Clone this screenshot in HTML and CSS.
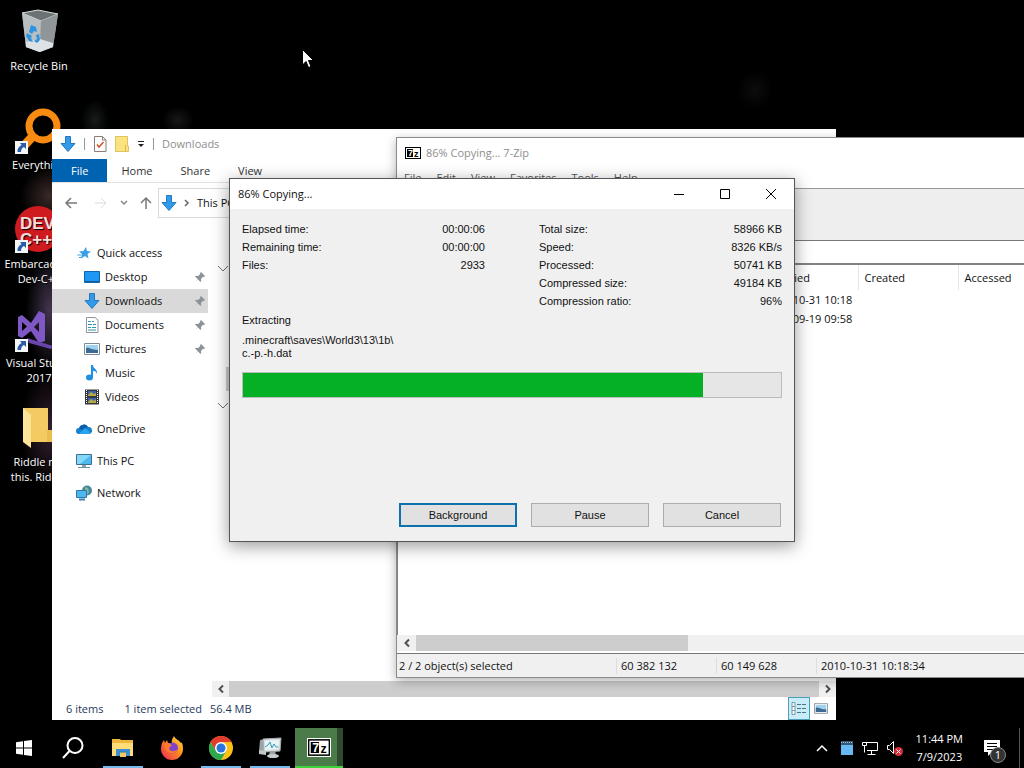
FILE: index.html
```html
<!DOCTYPE html>
<html lang="en">
<head>
    <meta charset="UTF-8">
    <meta name="viewport" content="width=device-width, initial-scale=1.0">
    <title>Desktop</title>
    <link rel="stylesheet" href="styles.css">
</head>
<body>
    <!-- Shared icons -->
    <svg class="defs" aria-hidden="true">
        <symbol id="i-down" viewBox="0 0 16 16">
            <path d="M5.500 0.500h5v7h4.500L8 15.500 1 7.500h4.500z" fill="#2f9bea" stroke="#2678bd" stroke-width="1"/>
        </symbol>
        <symbol id="i-7z" viewBox="0 0 16 12">
            <rect x="0" y="0" width="16" height="12" fill="#000"/>
            <rect x="1" y="1" width="14" height="10" fill="#fff"/>
            <rect x="2" y="2" width="6" height="8" fill="#000"/>
            <text x="3" y="9" class="seven">7</text>
            <text x="9" y="10" class="zed">z</text>
        </symbol>
        <symbol id="i-pin" viewBox="0 0 12 12">
            <path d="M7 1l4 4-1 1-1-.3L7 8l.2 2L6.400 11 3.800 8.300 1 11l2.700-3L1 5.500 2 4.700l2 .2L6.300 3 6 2z" fill="#8b939a"/>
        </symbol>
        <symbol id="i-shortcut" viewBox="0 0 13 13">
            <path d="M0 0h13v13H0z" fill="#f4f6f8"/>
            <path d="M5 2h6v6L9 6c-2 1-3 2.500-3 5H2.500C2 8 4 5.500 6.600 4z" fill="#2b5ca8"/>
        </symbol>
        <symbol id="i-monitor" viewBox="0 0 16 16">
            <path d="M.5 1.500h15v10H.5z" fill="#4db8ee" stroke="#3d6f96"/>
            <path d="M1 2h14L4 11H1z" fill="#86d6f8"/>
            <path d="M6 12h4v2H6z" fill="#8aa4b5"/>
            <path d="M2 14.500h12" stroke="#6f8fa4"/>
        </symbol>
        <symbol id="i-picture" viewBox="0 0 16 12">
            <path d="M.5.5h15v11H.5z" fill="#fff" stroke="#7f8b96"/>
            <path d="M2 2h12v8H2z" fill="#9fd2f1"/>
            <path d="M2 5c3-1 5 2 12 2v3H2z" fill="#3c6a92"/>
        </symbol>
        <symbol id="i-left" viewBox="0 0 8 10">
            <path d="M6 1.500L2.500 5 6 8.500" fill="none" stroke="#505050" stroke-width="2"/>
        </symbol>
        <symbol id="i-right" viewBox="0 0 8 10">
            <path d="M2 1.500L5.500 5 2 8.500" fill="none" stroke="#505050" stroke-width="2"/>
        </symbol>
        <symbol id="i-chevron" viewBox="0 0 12 8">
            <path d="M1 1l5 5 5-5" fill="none" stroke="#707070" stroke-width="1"/>
        </symbol>
    </svg>

    <div class="screen">
        <main class="desktop">
            <div class="shortcuts">
                <a class="shortcut" href="#">
                    <svg class="art" viewBox="4 0 48 48">
                        <path d="M11 5l16-3 20 4-5 33-14 5-13-5z" fill="#9da3a6"/>
                        <path d="M11 5l16-3 20 4-17 7z" fill="#6d7274" stroke="#d6dadb"/>
                        <path d="M11 5l19 8-1 31-14-5z" fill="#b9bec0"/>
                        <path d="M30 13l17-7-5 33-13 5z" fill="#8f9598"/>
                        <path d="M15 34l14-3 13 4v4l-13 5-14-5z" fill="#dfe2e4"/>
                        <path d="M20 17l5 2 1 5-3-1-2 3-3-2zM16 25l5 3-1 2 2 4-4-1-3-5zM25 27l3-1 1 6-3 3-3-2 3-2z" fill="#2f94e0"/>
                    </svg>
                    <span>Recycle Bin</span>
                </a>
                <a class="shortcut" href="#">
                    <svg class="art" viewBox="3 0 48 48">
                        <circle cx="31" cy="19" r="14" fill="none" stroke="#f98a12" stroke-width="7"/>
                        <path d="M21 29L10 41" stroke="#f98a12" stroke-width="9"/>
                        <use href="#i-shortcut" x="3" y="34" width="13" height="13"/>
                    </svg>
                    <span>Everything</span>
                </a>
                <a class="shortcut" href="#">
                    <svg class="art" viewBox="3 0 48 48">
                        <circle cx="26" cy="23" r="23" fill="#cf1b20"/>
                        <text x="8" y="23" class="dev">DEV</text>
                        <text x="8" y="39" class="dev">C++</text>
                        <use href="#i-shortcut" x="3" y="34" width="13" height="13"/>
                    </svg>
                    <span>Embarcadero Dev-C++</span>
                </a>
                <a class="shortcut" href="#">
                    <svg class="art" viewBox="3 0 48 48">
                        <path d="M6 12l4-2 9 8L27 6l6 3v27l-6 2-8-12-9 7-4-2zm4 5v9l5-4.500zm17 0l-5 5 5 5z" fill="#8058c6"/>
                        <path d="M15 33l26 8-2 3-22-6z" fill="#6845ab"/>
                        <use href="#i-shortcut" x="3" y="34" width="13" height="13"/>
                    </svg>
                    <span>Visual Studio 2017</span>
                </a>
                <a class="shortcut" href="#">
                    <svg class="art" viewBox="3 0 48 48">
                        <path d="M11 4h25v34H15z" fill="#f3cb62"/>
                        <path d="M11 4l8 7v33l-8-6z" fill="#ffe398"/>
                        <path d="M35 26h6v12h-6z" fill="#e9bd50"/>
                    </svg>
                    <span>Riddle me<br>this. Riddle</span>
                </a>
            </div>

            <section class="window explorer">
                <header class="explorer-title">
                    <svg width="16" height="16"><use href="#i-down"/></svg>
                    <i class="bar"></i>
                    <svg width="14" height="16" viewBox="0 0 14 16">
                        <path d="M1.500.5H9.500L13 4v11.500H1.500z" fill="#fdfdfd" stroke="#8a7f78"/>
                        <path d="M9.500.5V4H13" fill="none" stroke="#8a7f78"/>
                        <path d="M4 8.500l2 2.500 4.500-5" fill="none" stroke="#d0522b" stroke-width="1.500"/>
                    </svg>
                    <svg width="14" height="16" viewBox="0 0 14 16">
                        <path d="M.5.5h12V10h1v5.500H.5z" fill="#fbe384" stroke="#e2c35a"/>
                        <path d="M10.500 15V9" stroke="#dcb94c"/>
                    </svg>
                    <svg width="8" height="8" viewBox="0 0 8 8"><path d="M1 1.500h6" stroke="#222"/><path d="M1 4h6L4 7z" fill="#222"/></svg>
                    <i class="bar"></i>
                    <span>Downloads</span>
                </header>
                <nav class="ribbon">
                    <a class="file" href="#">File</a>
                    <a href="#">Home</a>
                    <a href="#">Share</a>
                    <a href="#">View</a>
                </nav>
                <div class="navbar">
                    <button aria-label="Back"><svg width="14" height="12" viewBox="0 0 14 12"><path d="M13 6H2M7 1L2 6l5 5" fill="none" stroke="#777" stroke-width="1.500"/></svg></button>
                    <button aria-label="Forward"><svg width="14" height="12" viewBox="0 0 14 12"><path d="M1 6h11M7 1l5 5-5 5" fill="none" stroke="#dcdcdc" stroke-width="1"/></svg></button>
                    <button class="recent" aria-label="Recent locations"><svg width="8" height="6" viewBox="0 0 8 6"><path d="M1 1l3 3 3-3" fill="none" stroke="#888" stroke-width="1.500"/></svg></button>
                    <button aria-label="Up"><svg width="12" height="14" viewBox="0 0 12 14"><path d="M6 13V2M1 7l5-5 5 5" fill="none" stroke="#777" stroke-width="1.500"/></svg></button>
                    <div class="address">
                        <svg width="16" height="16"><use href="#i-down"/></svg>
                        <svg width="6" height="8" viewBox="0 0 6 8"><path d="M1 1l3 3-3 3" fill="none" stroke="#666" stroke-width="1.500"/></svg>
                        <span>This PC</span>
                    </div>
                </div>
                <div class="explorer-body">
                    <nav class="tree">
                        <a class="root" href="#">
                            <svg width="16" height="16" viewBox="0 0 16 16"><path d="M10 2l1 4 4 .5-3.500 2.500 1 4.500-3.500-2.500-4 2.500 1-4.500L3 6.500l4.500-.5z" fill="#3a9fe8"/><path d="M1.500 10h4M3 12.500h3" stroke="#3a9fe8"/></svg>
                            <span>Quick access</span>
                        </a>
                        <a href="#">
                            <svg width="16" height="16" viewBox="0 0 16 16"><path d="M.5 2.500h15v11H.5z" fill="#1e98f2" stroke="#1565ad"/><path d="M1 12.500h14" stroke="#105a9e"/></svg>
                            <span>Desktop</span>
                            <svg class="pin" width="12" height="12"><use href="#i-pin"/></svg>
                        </a>
                        <a class="active" href="#">
                            <svg width="16" height="16"><use href="#i-down"/></svg>
                            <span>Downloads</span>
                            <svg class="pin" width="12" height="12"><use href="#i-pin"/></svg>
                        </a>
                        <a href="#">
                            <svg width="16" height="16" viewBox="0 0 16 16"><path d="M2.500.5H11L14 3v12.500H2.500z" fill="#fff" stroke="#8b969e"/><path d="M4 4.500h3M8 4.500h2M4 7.500h4M9 7.500h3M4 10.500h3M8 10.500h4M4 13h8" stroke="#3495a8"/></svg>
                            <span>Documents</span>
                            <svg class="pin" width="12" height="12"><use href="#i-pin"/></svg>
                        </a>
                        <a href="#">
                            <svg width="16" height="12"><use href="#i-picture"/></svg>
                            <span>Pictures</span>
                            <svg class="pin" width="12" height="12"><use href="#i-pin"/></svg>
                        </a>
                        <a href="#">
                            <svg width="16" height="16" viewBox="0 0 16 16"><ellipse cx="5.500" cy="12.500" rx="3.500" ry="3" fill="#1e90e0"/><path d="M7 0h2c0 4 5 4 4 9-1-3-2-3-4-3v7H7z" fill="#1e90e0"/></svg>
                            <span>Music</span>
                        </a>
                        <a href="#">
                            <svg width="16" height="16" viewBox="0 0 16 16"><path d="M1 .5h14v15H1z" fill="#35383d"/><path d="M4 2h8v5H4zM4 9h8v5H4z" fill="#3d63a8"/><path d="M4 6l3-3 3 2 2-1v3H4zM4 13l3-3 3 2 2-2v4H4z" fill="#b7a84a"/><path d="M2.500 1v14M13.500 1v14" stroke="#fff" stroke-width="1" stroke-dasharray="1 1"/></svg>
                            <span>Videos</span>
                        </a>
                        <a class="root" href="#">
                            <svg width="16" height="16" viewBox="0 0 16 16"><path d="M3 13a3 3 0 0 1 0-6 5 5 0 0 1 9-1 3.500 3.500 0 0 1 1 7z" fill="#1680d0"/><path d="M3 13l6-6 6 5-2 1z" fill="#29a5ed"/><path d="M3 7a5 5 0 0 1 9-1L9 7 6 9z" fill="#0d5da8"/></svg>
                            <span>OneDrive</span>
                        </a>
                        <a class="root" href="#">
                            <svg width="16" height="16"><use href="#i-monitor"/></svg>
                            <span>This PC</span>
                        </a>
                        <a class="root" href="#">
                            <svg width="16" height="16" viewBox="0 0 16 16"><circle cx="11" cy="5.500" r="5" fill="#46889b"/><path d="M9 2l3 1 1 4-2 3-2-3z" fill="#7fb9a4"/><path d="M.5 5.500h10v7H.5z" fill="#4db8ee" stroke="#2f76a8"/><path d="M3 14.500h6" stroke="#3a82b3" stroke-width="2"/></svg>
                            <span>Network</span>
                        </a>
                    </nav>
                    <div class="files">
                        <div class="groups">
                            <button aria-label="Collapse group"><svg width="12" height="8"><use href="#i-chevron"/></svg></button>
                            <i class="nub"></i>
                            <button aria-label="Collapse group"><svg width="12" height="8"><use href="#i-chevron"/></svg></button>
                        </div>
                        <div class="scroll">
                            <button aria-label="Scroll left"><svg width="8" height="10"><use href="#i-left"/></svg></button>
                            <i class="thumb"></i>
                            <button aria-label="Scroll right"><svg width="8" height="10"><use href="#i-right"/></svg></button>
                        </div>
                    </div>
                </div>
                <footer class="explorer-status">
                    <span>6 items</span>
                    <span class="selected">1 item selected</span>
                    <span>56.4 MB</span>
                    <div class="views">
                        <button class="on" aria-label="Details"><svg width="16" height="14" viewBox="0 0 16 14"><path d="M1 .5h3v12H1zM1 4.500h3M1 8.500h3" fill="#fff" stroke="#7b98a6"/><path d="M6 2.500h4M11 2.500h4M6 6.500h4M11 6.500h4M6 10.500h4M11 10.500h4" stroke="#4f7482"/></svg></button>
                        <button aria-label="Large icons"><svg width="14" height="11"><use href="#i-picture"/></svg></button>
                    </div>
                </footer>
            </section>

            <section class="window zip">
                <header class="zip-title">
                    <svg width="16" height="12"><use href="#i-7z"/></svg>
                    <span>86% Copying... 7-Zip</span>
                </header>
                <nav class="menu">
                    <a href="#">File</a>
                    <a href="#">Edit</a>
                    <a href="#">View</a>
                    <a href="#">Favorites</a>
                    <a href="#">Tools</a>
                    <a href="#">Help</a>
                </nav>
                <div class="toolbar"></div>
                <div class="path"></div>
                <div class="list">
                    <table>
                        <thead>
                            <tr><th class="name"></th><th></th><th></th><th>Modified</th><th>Created</th><th class="last">Accessed</th></tr>
                        </thead>
                        <tbody>
                            <tr><td></td><td></td><td></td><td>2010-10-31 10:18</td><td></td><td></td></tr>
                            <tr><td></td><td></td><td></td><td>2010-09-19 09:58</td><td></td><td></td></tr>
                        </tbody>
                    </table>
                </div>
                <div class="scroll zip-scroll">
                    <button aria-label="Scroll left"><svg width="8" height="10"><use href="#i-left"/></svg></button>
                    <i class="thumb"></i>
                </div>
                <footer class="zip-status">
                    <span class="count">2 / 2 object(s) selected</span>
                    <span>60 382 132</span>
                    <span>60 149 628</span>
                    <span class="date">2010-10-31 10:18:34</span>
                </footer>
            </section>

            <section class="window dialog">
                <header class="dialog-title">
                    <h1>86% Copying...</h1>
                    <button aria-label="Minimize"><svg width="12" height="12" viewBox="0 0 12 12"><path d="M1 6.500h10" stroke="#000"/></svg></button>
                    <button aria-label="Maximize"><svg width="12" height="12" viewBox="0 0 12 12"><path d="M1.500 1.500h9v9h-9z" fill="none" stroke="#000"/></svg></button>
                    <button aria-label="Close"><svg width="12" height="12" viewBox="0 0 12 12"><path d="M1 1l10 10M11 1L1 11" stroke="#000"/></svg></button>
                </header>
                <div class="dialog-body">
                    <div class="stats">
                        <dl>
                            <dt>Elapsed time:</dt><dd>00:00:06</dd>
                            <dt>Remaining time:</dt><dd>00:00:00</dd>
                            <dt>Files:</dt><dd>2933</dd>
                        </dl>
                        <dl>
                            <dt>Total size:</dt><dd>58966 KB</dd>
                            <dt>Speed:</dt><dd>8326 KB/s</dd>
                            <dt>Processed:</dt><dd>50741 KB</dd>
                            <dt>Compressed size:</dt><dd>49184 KB</dd>
                            <dt>Compression ratio:</dt><dd>96%</dd>
                        </dl>
                    </div>
                    <label class="action" for="copy">Extracting</label>
                    <p class="current">.minecraft\saves\World3\13\1b\<br>c.-p.-h.dat</p>
                    <progress id="copy" value="50741" max="59300"></progress>
                    <div class="buttons">
                        <button class="default">Background</button>
                        <button>Pause</button>
                        <button>Cancel</button>
                    </div>
                </div>
            </section>

            <svg class="cursor" width="12" height="20" viewBox="0 0 12 20">
                <path d="M.5.5v15.500l3.500-3.500 2.500 6 2.500-1-2.500-6h5z" fill="#fff" stroke="#000"/>
            </svg>
        </main>

        <footer class="taskbar">
            <button class="task" aria-label="Start">
                <svg width="16" height="16" viewBox="0 0 16 16"><path d="M0 2.200L7 1.200V7.500H0zM8 1l8-1v7.500H8zM0 8.500h7v6.300l-7-1zM8 8.500h8V16l-8-1z" fill="#fff"/></svg>
            </button>
            <button class="task search" aria-label="Search">
                <svg width="24" height="24" viewBox="0 0 24 24"><circle cx="14" cy="9.500" r="7.500" fill="none" stroke="#fff" stroke-width="2"/><path d="M8.500 15L2 22" stroke="#fff" stroke-width="2"/></svg>
            </button>
            <button class="task open" aria-label="File Explorer">
                <svg width="22" height="20" viewBox="0 0 22 20"><path d="M0 2V1h8l1 1h12v16H0z" fill="#eeb63d"/><path d="M0 5h21v13H0z" fill="#ffdc77"/><path d="M4 11h14v7h-4v-3H8v3H4z" fill="#3d8fd1"/><path d="M8 14h6v5H8z" fill="#f1c862"/><path d="M7 14h8" stroke="#2a72b0"/></svg>
            </button>
            <button class="task" aria-label="Firefox">
                <svg width="24" height="24" viewBox="0 0 24 24">
                    <defs><linearGradient id="fox" x1="1" y1="0" x2="0" y2="1"><stop offset="0" stop-color="#ffe347"/><stop offset=".45" stop-color="#ff8b1c"/><stop offset="1" stop-color="#f0205f"/></linearGradient></defs>
                    <path d="M14 0c1 3 5 4 7 7 1-1 2 2 2 6a11 11 0 0 1-22 0c0-4 1-7 3-9l1 3 2-3 1 3 4 0c-1-3 1-5 2-7z" fill="url(#fox)"/>
                    <circle cx="12.500" cy="12" r="5.500" fill="#8044cb"/>
                    <path d="M4 8c4-3 5 0 8 1l-3 3c0 4 6 4 9 1-2 7-13 6-14-5z" fill="#ff7a2b"/>
                </svg>
            </button>
            <button class="task open" aria-label="Chrome">
                <svg width="24" height="24" viewBox="0 0 24 24">
                    <circle cx="12" cy="12" r="12" fill="#fbc116"/>
                    <path d="M1.600 6A12 12 0 0 1 22.400 6H12L6.800 15z" fill="#e33b2e"/>
                    <path d="M1.600 6A12 12 0 0 0 12 24l5.200-9H6.800z" fill="#2da94f"/>
                    <circle cx="12" cy="12" r="6" fill="#fff"/>
                    <circle cx="12" cy="12" r="4.500" fill="#2b73df"/>
                </svg>
            </button>
            <button class="task open" aria-label="Resource Monitor">
                <svg width="24" height="22" viewBox="0 0 24 22">
                    <path d="M2 3l6-1v15l-7-2z" fill="#9ca4a6"/>
                    <path d="M5 2l18-1-1 13-16 1z" fill="#d9dfe1" stroke="#a4abad"/>
                    <path d="M7 4l14-1-1 9-13 1z" fill="#eaf5f7"/>
                    <path d="M7 10l3-2 2-3 2 6 2-4 2 3h2" fill="none" stroke="#3599b6"/>
                    <path d="M12 14h5l1 4H11z" fill="#9ba3a5"/><ellipse cx="15" cy="19" rx="6" ry="2" fill="#c8cecf"/>
                    <path d="M1 13l7 1v4l-7-1z" fill="#c2c8ca"/>
                </svg>
            </button>
            <button class="task current-task" aria-label="7-Zip">
                <svg class="task-7z" width="22" height="17"><use href="#i-7z"/></svg>
            </button>
            <div class="tray">
                <button aria-label="Show hidden icons"><svg width="12" height="8" viewBox="0 0 12 8"><path d="M1 7l5-5 5 5" fill="none" stroke="#fff" stroke-width="1.500"/></svg></button>
                <svg width="12" height="14" viewBox="0 0 12 14"><path d="M0 0h12v14H0z" fill="#66b9f2"/><path d="M0 0h12v4H0z" fill="#345773"/><path d="M0 1.500h12" stroke="#a5c9e0" stroke-dasharray="1 1"/></svg>
                <svg width="16" height="14" viewBox="0 0 16 14"><path d="M4 1.500h11.500v8H5M.5 1.500h4v3h-4zM2.500 5v6.500M9.500 10v3M5.500 13.500h8" fill="none" stroke="#fff"/></svg>
                <svg width="16" height="15" viewBox="0 0 16 15"><path d="M.5 4.500h2l4-4v12l-4-4h-2z" fill="none" stroke="#fff"/><circle cx="11.500" cy="10.500" r="4.500" fill="#d52e37"/><path d="M9.500 8.500l4 4M13.500 8.500l-4 4" stroke="#fff"/></svg>
                <div class="clock"><time>11:44 PM</time><time>7/9/2023</time></div>
                <button class="notes" aria-label="Notifications">
                    <svg width="16" height="16" viewBox="0 0 16 16"><path d="M0 0h16v12H8l-4 4v-4H0z" fill="#fff"/><path d="M3 3.500h10M3 6.500h10M3 9.500h7" stroke="#000"/></svg>
                    <span class="badge">1</span>
                </button>
                <i class="peek"></i>
            </div>
        </footer>
    </div>
</body>
</html>
```
FILE: styles.css
```css
* {
    box-sizing: border-box;
}
body {
    margin: 0;
    background-color: #000;
    color: #111;
    font-family: "Open Sans", "Noto Sans", sans-serif;
    font-size: 11px;
    line-height: 16px;
}
a {
    color: inherit;
    text-decoration: none;
}
button {
    display: flex;
    align-items: center;
    justify-content: center;
    padding: 0;
    border: none;
    background: none;
    font: inherit;
    color: inherit;
}
svg {
    display: block;
    flex-shrink: 0;
}
.defs {
    display: none;
}
.seven, .zed {
    font: bold 9px "Liberation Sans", sans-serif;
}
.seven {
    fill: #fff;
}
.dev {
    font: bold 17px "Liberation Sans", sans-serif;
    fill: #f6dcdc;
}
.screen {
    display: flex;
    flex-direction: column;
    height: 100vh;
    overflow: hidden;
}

/* Desktop */
.desktop {
    position: relative;
    flex: 1;
    overflow: hidden;
    background:
        radial-gradient(ellipse 24px 60px at 50px 310px, #43364f, transparent),
        radial-gradient(ellipse 30px 60px at 50px 430px, #33202f, transparent),
        radial-gradient(ellipse 30px 30px at 50px 196px, #3a2a28, transparent),
        radial-gradient(ellipse 14px 20px at 95px 120px, #171a1b, transparent),
        radial-gradient(ellipse 16px 14px at 178px 120px, #171717, transparent),
        radial-gradient(ellipse 18px 20px at 755px 90px, #0c0c0c, transparent),
        #000;
}
.shortcuts {
    display: grid;
    grid-auto-rows: 99px;
    width: 78px;
    padding-top: 8px;
}
.shortcut {
    display: flex;
    flex-direction: column;
    align-items: center;
    gap: 2px;
    color: #fff;
    line-height: 15px;
    text-align: center;
    text-shadow: 1px 1px 1px #000;
}
.art {
    width: 48px;
    height: 48px;
}
.window {
    position: absolute;
    display: flex;
    flex-direction: column;
}

/* File explorer */
.explorer {
    left: 52px;
    top: 129px;
    width: 784px;
    height: 591px;
    background-color: #fff;
}
.explorer-title {
    display: flex;
    align-items: center;
    gap: 8px;
    height: 30px;
    padding-left: 8px;
    color: #8e8e8e;
}
.bar {
    width: 1px;
    height: 12px;
    background-color: #999;
}
.ribbon {
    display: flex;
    height: 24px;
    border-bottom: 1px solid #e2e2e2;
    color: #333;
}
.ribbon a {
    padding: 4px 14px;
}
.ribbon .file {
    padding: 4px 19px;
    background-color: #0063b1;
    color: #fff;
}
.navbar {
    display: flex;
    align-items: center;
    gap: 16px;
    height: 40px;
    padding-left: 12px;
}
.recent {
    margin: 0 -4px;
}
.address {
    display: flex;
    flex: 1;
    align-items: center;
    gap: 7px;
    height: 30px;
    margin-left: -10px;
    margin-right: 8px;
    padding-left: 2px;
    border: 1px solid #d9d9d9;
}
.explorer-body {
    display: flex;
    flex: 1;
}
.tree {
    width: 160px;
    padding-top: 18px;
}
.tree a {
    display: flex;
    align-items: center;
    gap: 5px;
    height: 24px;
    margin-right: 4px;
    padding: 0 2px 0 32px;
}
.tree .root {
    margin: 8px 0;
    padding-left: 24px;
}
.tree .root:first-child {
    margin: 0;
}
.tree .root + .root {
    margin-top: 0;
}
.tree .active {
    background-color: #d9d9d9;
}
.pin {
    margin-left: auto;
}
.files {
    display: flex;
    flex: 1;
    flex-direction: column;
}
.groups {
    display: flex;
    flex: 1;
    flex-direction: column;
    align-items: flex-start;
    padding: 42px 0 0 5px;
}
.nub {
    width: 8px;
    height: 24px;
    margin: 94px 0 11px 9px;
    background-color: #cdcdcd;
}
.scroll {
    display: flex;
    height: 16px;
    background-color: #f0f0f0;
}
.scroll button {
    width: 17px;
}
.thumb {
    flex: 1;
    background-color: #cdcdcd;
}
.explorer-status {
    display: flex;
    align-items: center;
    height: 23px;
    padding-left: 14px;
    color: #1e395b;
}
.selected {
    margin: 0 8px 0 21px;
}
.views {
    display: flex;
    margin-left: auto;
    padding-right: 4px;
}
.views button {
    width: 22px;
    height: 23px;
}
.views .on {
    border: 1px solid #4b9fbd;
    background-color: #c9edf8;
}

/* 7-Zip file manager */
.zip {
    left: 396px;
    right: 0;
    top: 137px;
    height: 541px;
    border: 1px solid #8b8b8b;
    border-right: none;
    background-color: #fff;
    box-shadow: 0 3px 10px rgba(0,0,0,0.3);
}
.zip-title {
    display: flex;
    align-items: center;
    gap: 5px;
    height: 30px;
    padding-left: 8px;
    color: #8e8e8e;
}
.menu {
    display: flex;
    gap: 15px;
    height: 20px;
    padding: 2px 7px;
    color: #555;
}
.toolbar {
    height: 53px;
    border-top: 1px solid #999;
    border-bottom: 1px solid #777;
    background-color: #eee;
}
.path {
    height: 24px;
    border-bottom: 2px solid #828282;
}
.list {
    flex: 1;
    overflow: hidden;
    border-left: 1px solid #828282;
}
table {
    width: 100%;
    border-collapse: collapse;
    table-layout: fixed;
}
th {
    width: 100px;
    height: 25px;
    padding: 0 6px;
    border-right: 1px solid #e5e5e5;
    font-weight: normal;
    text-align: left;
}
.name {
    width: 160px;
}
.last {
    width: auto;
    border-right: none;
}
td {
    height: 19px;
    padding: 0 6px;
    white-space: nowrap;
}
.zip-scroll {
    margin-bottom: 2px;
}
.zip-scroll button {
    width: 19px;
}
.zip-scroll .thumb {
    flex: 0 0 272px;
}
.zip-status {
    display: flex;
    align-items: center;
    height: 24px;
    border-top: 1px solid #777;
    background-color: #f0f0f0;
}
.zip-status span {
    width: 100px;
    padding-left: 4px;
    border-left: 1px solid #ddd;
}
.zip-status .count {
    width: 219px;
    padding-left: 2px;
    border-left: none;
}
.zip-status .date {
    width: auto;
}

/* Progress dialog */
.dialog {
    left: 229px;
    top: 178px;
    width: 566px;
    height: 364px;
    border: 1px solid #555;
    background-color: #f0f0f0;
    box-shadow: 0 4px 16px rgba(0,0,0,0.4);
}
.dialog-title {
    display: flex;
    height: 30px;
    background-color: #fff;
}
.dialog-title h1 {
    margin: 0 auto 0 8px;
    font-size: 11px;
    font-weight: normal;
    line-height: 30px;
}
.dialog-title button {
    width: 46px;
    height: 29px;
}
.dialog-body {
    display: flex;
    flex: 1;
    flex-direction: column;
    padding: 11px 12px 14px;
    font-family: "Liberation Sans", Arial, sans-serif;
}
.stats {
    display: grid;
    grid-template-columns: 1fr 1fr;
    gap: 54px;
    line-height: 18px;
}
dl {
    display: grid;
    grid-template-columns: auto auto;
    align-content: start;
    margin: 0;
}
dd {
    margin: 0;
    text-align: right;
}
.action {
    margin-top: 2px;
}
.current {
    margin: 6px 0 12px;
    line-height: 13px;
}
progress {
    display: block;
    width: 100%;
    height: 26px;
    border: 1px solid #bcbcbc;
    background-color: #e6e6e6;
    -webkit-appearance: none;
    appearance: none;
}
progress::-webkit-progress-bar {
    background-color: #e6e6e6;
}
progress::-webkit-progress-value {
    background-color: #06b025;
}
.buttons {
    display: flex;
    justify-content: flex-end;
    gap: 14px;
    margin-top: auto;
    padding-right: 1px;
}
.buttons button {
    width: 118px;
    height: 24px;
    border: 1px solid #adadad;
    background-color: #e1e1e1;
}
.buttons .default {
    border: 2px solid #0f70b0;
}
.cursor {
    position: absolute;
    left: 302px;
    top: 49px;
}

/* Taskbar */
.taskbar {
    display: flex;
    gap: 1px;
    height: 40px;
    background-color: #000;
    color: #fff;
}
.task {
    width: 48px;
    height: 40px;
}
.search {
    margin-right: 1px;
}
.open {
    background: linear-gradient(#76b9ed, #76b9ed) center bottom / 40px 2px no-repeat;
}
.current-task {
    border-bottom: 2px solid #40d43b;
    background: linear-gradient(90deg, #4a7b48 42px, #304a30 42px);
}
.task-7z {
    outline: 1px solid #fff;
}
.tray {
    display: flex;
    align-items: center;
    gap: 8px;
    margin-left: auto;
}
.tray svg {
    margin-left: 1px;
}
.tray button:first-child {
    margin-right: 4px;
}
.clock {
    display: flex;
    flex-direction: column;
    align-items: center;
    margin: 0 8px 0 5px;
    line-height: 18px;
}
.notes {
    position: relative;
    width: 24px;
    height: 40px;
}
.badge {
    position: absolute;
    left: 11px;
    top: 19px;
    width: 16px;
    height: 16px;
    border: 1px solid #888;
    border-radius: 50%;
    background-color: #333;
    line-height: 14px;
}
.peek {
    width: 1px;
    height: 40px;
    margin: 0 4px 0 8px;
    background-color: #555;
}
```
